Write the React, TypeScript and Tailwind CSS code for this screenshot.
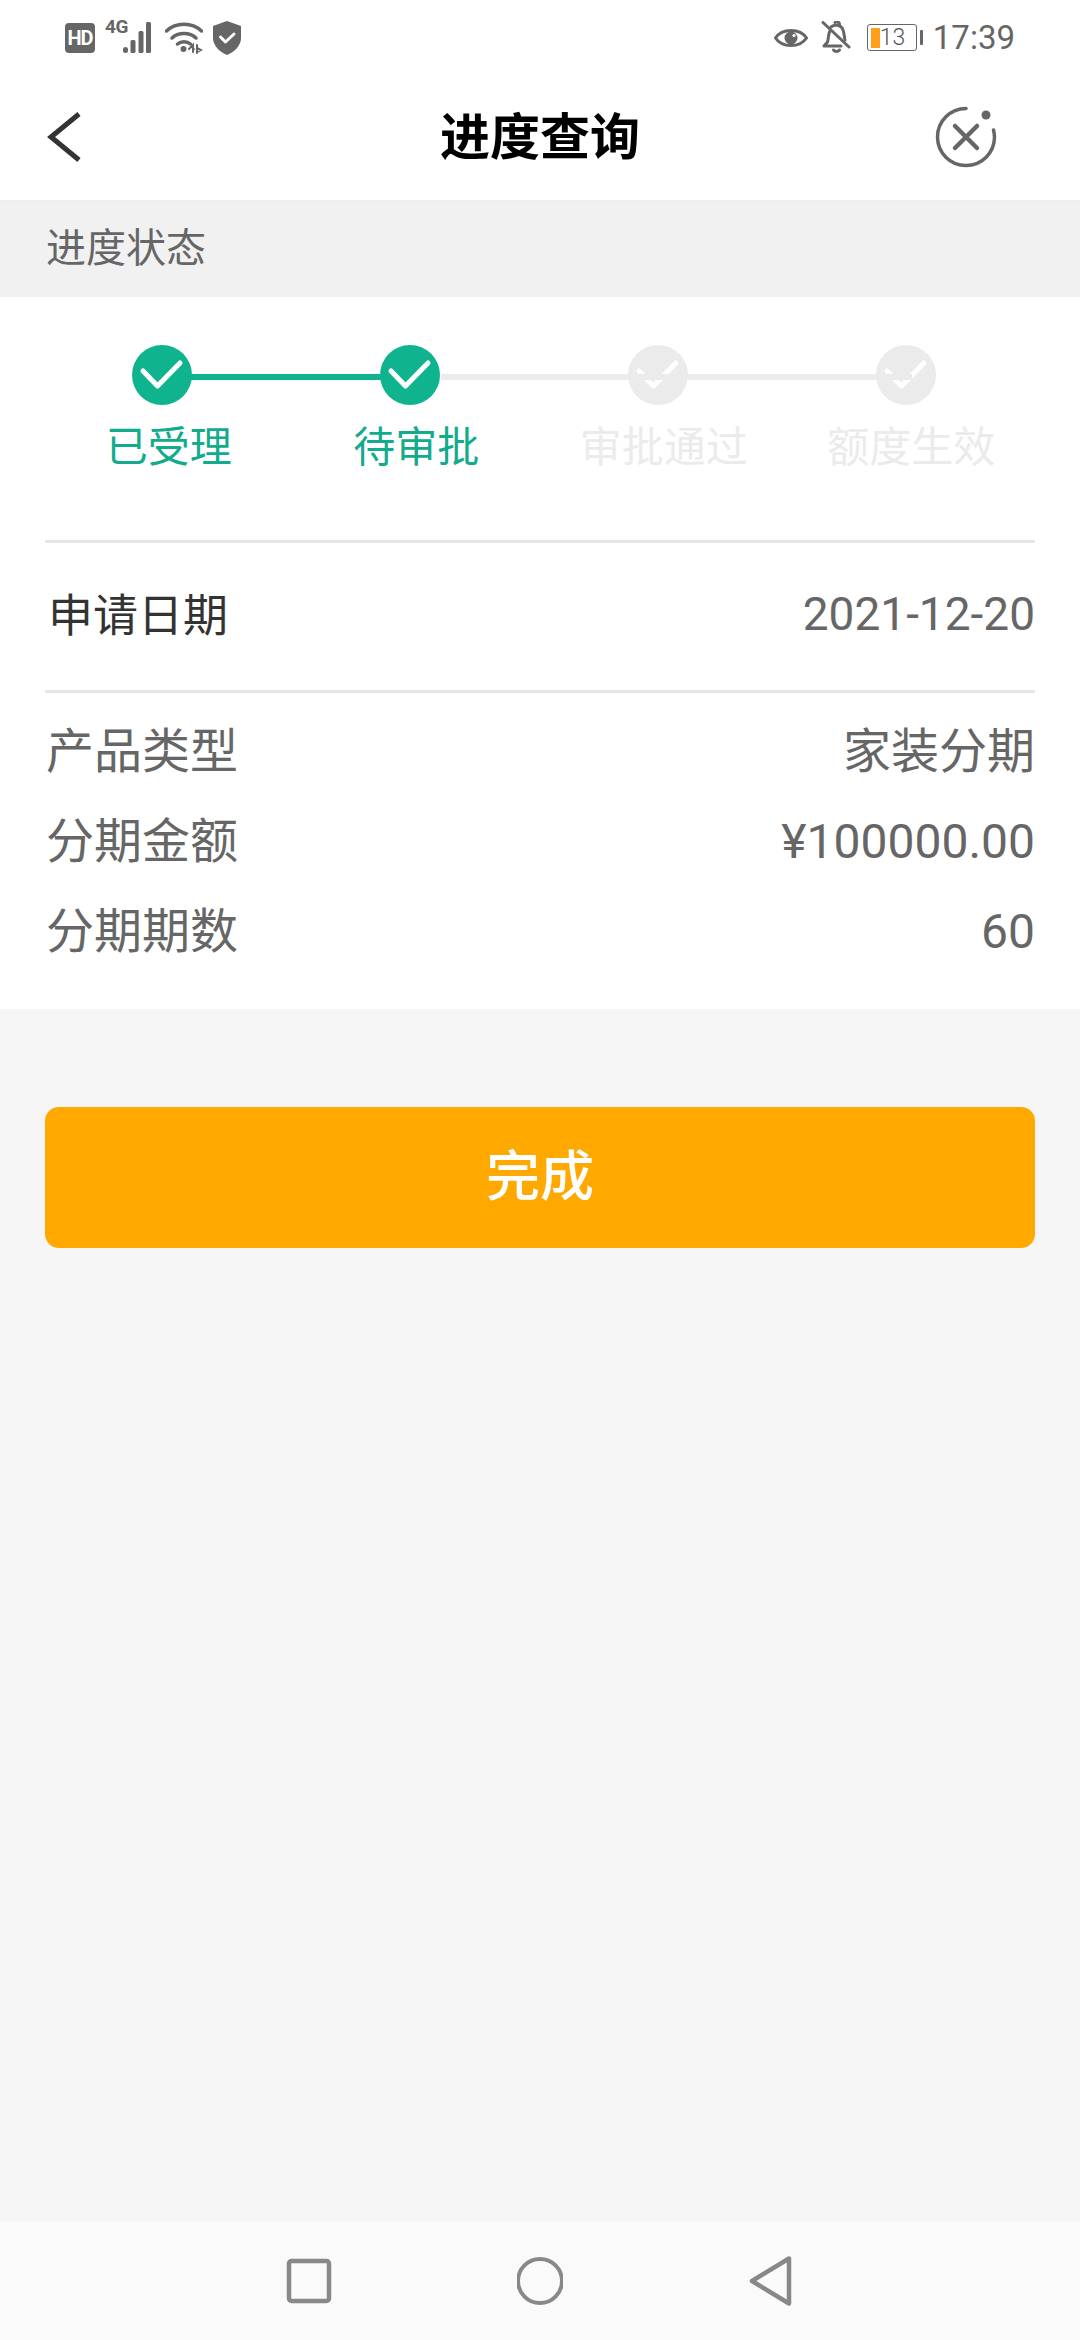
import React from "react";

const steps = [
  { label: "已受理", done: true },
  { label: "待审批", done: true },
  { label: "审批通过", done: false },
  { label: "额度生效", done: false },
];

const details = [
  { label: "产品类型", value: "家装分期" },
  { label: "分期金额", value: "¥100000.00" },
  { label: "分期期数", value: "60" },
];

function StepDot({ done }: { done: boolean }) {
  return (
    <div
      className={
        done
          ? "w-[60px] h-[60px] rounded-full bg-[#0fb48f] flex-none"
          : "w-[60px] h-[60px] rounded-full bg-[#ebebeb] flex-none"
      }
    >
      <svg width="60" height="60" viewBox="0 0 60 60" fill="none">
        <path
          d="M11 26 L25.500 41 L48 18"
          stroke="white"
          strokeWidth="5"
          strokeLinecap="round"
          strokeLinejoin="round"
        />
      </svg>
    </div>
  );
}

function StatusBar() {
  return (
    <div className="h-[72px] flex items-center justify-between pl-[65px] pr-[65px] bg-white flex-none">
      <div className="flex items-center h-[72px]">
        <div className="w-[30px] h-[30px] rounded-[4px] bg-[#666] text-white text-[20px] leading-[30px] font-bold text-center tracking-[-1px] flex-none mt-[4px]">
          HD
        </div>
        <div className="relative w-[50px] h-[32px] ml-[10px] mt-[4px] flex-none">
          <span className="absolute left-0 top-[-5px] text-[19px] leading-[20px] font-bold text-[#666] tracking-[-0.5px]">
            4G
          </span>
          <svg className="absolute left-0 top-0" width="50" height="32" viewBox="0 0 50 32" fill="#666">
            <rect x="18" y="25" width="5" height="6" rx="2.500" />
            <rect x="25.500" y="18" width="5" height="13" rx="1.500" />
            <rect x="33.500" y="9" width="5" height="22" rx="1.500" />
            <rect x="41" y="0" width="5" height="31" rx="1.500" />
          </svg>
        </div>
        <svg className="ml-[10px] mt-[4px] flex-none" width="38" height="32" viewBox="0 0 38 32" fill="none" stroke="#666" strokeWidth="3.500" strokeLinecap="round">
          <path d="M1.500 9 C11 0 27 0 36.500 9" />
          <path d="M7 16 C13 10 25 10 31 16" />
          <path d="M12.500 22 C16 19 22 19 25.500 22" />
          <circle cx="18.500" cy="27" r="3" fill="#666" stroke="none" />
          <path d="M24 27 L28 23 V30 M28 27 H29" strokeWidth="2" />
          <path d="M32 23 V31 M32 26 L36 28 L32 30" strokeWidth="2" />
        </svg>
        <svg className="ml-[10px] mt-[3px] flex-none" width="28" height="34" viewBox="0 0 28 34" fill="none">
          <path d="M14 0 L28 5 V17 C28 25 21 31 14 34 C7 31 0 25 0 17 V5 Z" fill="#666" />
          <path d="M7.500 16 L12.500 21 L21 13" stroke="white" strokeWidth="3" strokeLinecap="round" strokeLinejoin="round" />
        </svg>
      </div>
      <div className="flex items-center h-[72px]">
        <svg width="34" height="26" viewBox="0 0 34 26" fill="none" className="mt-[3px] flex-none">
          <path d="M1.500 13 C8 3 26 3 32.500 13 C26 23 8 23 1.500 13 Z" stroke="#666" strokeWidth="3" />
          <circle cx="17" cy="13" r="6.500" fill="#666" />
          <circle cx="20" cy="10.500" r="1.600" fill="white" />
        </svg>
        <svg width="30" height="32" viewBox="0 0 30 32" fill="none" stroke="#666" strokeWidth="3" strokeLinecap="round" strokeLinejoin="round" className="ml-[13px] mt-[2px] flex-none">
          <path d="M2 1.500 L28 26" />
          <path d="M9 10 C7 13 7.500 19 6.500 21 L3 25 H20" />
          <path d="M10 6 C13 3.500 20 3 22 9 C23.500 13 23 15 24 19" />
          <path d="M14 1.500 C15 0.500 18 0.500 18.500 3" />
          <path d="M12.500 29 C14 31 17 31 18.500 29" />
        </svg>
        <div className="relative w-[50px] h-[27px] ml-[16px] mt-[2px] rounded-[3px] border border-[#666] flex-none overflow-hidden">
          <div className="absolute left-[3px] top-[3px] w-[9px] h-[20px] bg-[#ff9f1a]" />
          <span className="absolute left-[12px] top-0 text-[23px] leading-[25px] text-[#555] font-light">13</span>
        </div>
        <div className="w-[3px] h-[15px] ml-[3px] mt-[2px] bg-[#666] rounded-[1px] flex-none" />
        <span className="ml-[10px] mt-[3px] text-[33px] leading-[72px] text-[#666]">17:39</span>
      </div>
    </div>
  );
}

export default function App() {
  return (
    <div className="w-[1080px] h-[2340px] flex flex-col bg-[#f5f5f5] [font-family:Roboto,'Noto_Sans_CJK_SC',sans-serif]">
      <StatusBar />

      <header className="h-[129px] flex-none bg-white border-b border-[#eeeeee] flex items-center px-[46px]">
        <div className="flex-1 flex">
          <svg width="36" height="52" viewBox="0 0 36 52" fill="none" className="flex-none mt-[2px]">
            <path d="M33 3 L5 26 L33 49" stroke="#333" strokeWidth="5" strokeLinejoin="miter" />
          </svg>
        </div>
        <h1 className="text-[50px] leading-[60px] font-bold text-black mt-[4px]">进度查询</h1>
        <div className="flex-1 flex justify-end">
          <svg width="64" height="64" viewBox="0 0 64 64" fill="none" stroke="#666" strokeWidth="3.500" strokeLinecap="round" className="flex-none mt-[2px] mr-[36px]">
            <path d="M32 3.500 A 28.500 28.500 0 1 0 60.500 32 C60.500 29 60 27 59.500 25" />
            <path d="M21 21 L43 43 M43 21 L21 43" strokeWidth="4.500" />
            <circle cx="52" cy="10" r="4.500" fill="#666" stroke="none" />
          </svg>
        </div>
      </header>

      <div className="h-[96px] flex-none bg-[#f1f1f1] flex items-center pl-[46px]">
        <span className="text-[40px] leading-[48px] text-[#666]">进度状态</span>
      </div>

      <section className="flex-none bg-white h-[712px] flex flex-col">
        <div className="relative flex justify-between w-[804px] ml-[132px] mt-[48px] flex-none">
          {steps.map((s) => (
            <StepDot key={s.label} done={s.done} />
          ))}
          <div className="absolute left-[58px] top-[29px] w-[194px] h-[6px] bg-[#0fb48f]" />
          <div className="absolute left-[309px] top-[29px] w-[471px] h-[6px] bg-[#ebebeb]" />
        </div>
        <div className="grid grid-cols-4 mx-[45px] mt-[14px] flex-none">
          {steps.map((s) => (
            <div
              key={s.label}
              className={
                s.done
                  ? "text-center text-[42px] leading-[58px] text-[#12ab8c]"
                  : "text-center text-[42px] leading-[58px] text-[#ebebeb]"
              }
            >
              {s.label}
            </div>
          ))}
        </div>

        <div className="mx-[45px] mt-[63px] border-t-[3px] border-b-[3px] border-[#e6e6e6] h-[153px] flex items-center justify-between pl-[3px] flex-none">
          <span className="text-[45px] leading-[54px] text-[#333]">申请日期</span>
          <span className="text-[46px] leading-[54px] text-[#666] -mt-[6px]">2021-12-20</span>
        </div>

        <div className="mx-[45px] mt-[14px] flex flex-col pl-[1px]">
          {details.map((d) => (
            <div key={d.label} className="h-[90px] flex items-center justify-between text-[#666]">
              <span className="text-[48px] leading-[56px]">{d.label}</span>
              <span className="text-[48px] leading-[56px]">{d.value}</span>
            </div>
          ))}
        </div>
      </section>

      <div className="flex-1 px-[45px] pt-[98px]">
        <button className="w-full h-[141px] rounded-[14px] bg-[#ffa800] text-white text-[54px] font-medium">
          完成
        </button>
      </div>

      <nav className="h-[119px] flex-none bg-[#fafafa] flex items-center justify-center gap-[185px]">
        <svg width="46" height="46" viewBox="0 0 46 46" fill="none" className="flex-none">
          <rect x="3" y="3" width="40" height="40" rx="2.500" stroke="#888" strokeWidth="4.500" />
        </svg>
        <svg width="46" height="50" viewBox="0 0 46 50" fill="none" className="flex-none">
          <circle cx="23" cy="25" r="22" stroke="#888" strokeWidth="4" />
        </svg>
        <svg width="46" height="50" viewBox="0 0 46 50" fill="none" className="flex-none">
          <path d="M4 25 L41 2.500 V47.500 Z" stroke="#888" strokeWidth="4.500" strokeLinejoin="round" />
        </svg>
      </nav>
    </div>
  );
}
